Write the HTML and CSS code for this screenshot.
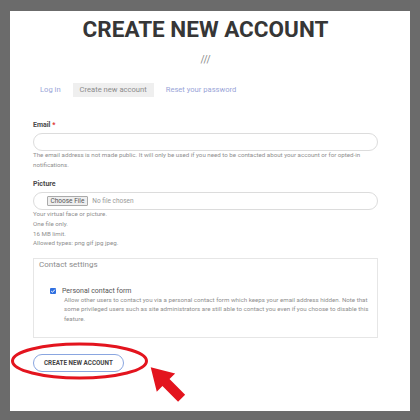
FILE: index.html
```html
<!DOCTYPE html>
<html lang="en">
<head>
    <meta charset="UTF-8">
    <meta name="viewport" content="width=device-width, initial-scale=1.0">
    <title>Create new account</title>
    <link rel="stylesheet" href="styles.css">
</head>
<body>

<div class="page">
    <h1 class="page-title">CREATE NEW ACCOUNT</h1>
    <div class="divider">///</div>

    <!-- Tabs -->
    <ul class="tabs">
        <li><a href="#">Log in</a></li>
        <li class="active">Create new account</li>
        <li><a href="#">Reset your password</a></li>
    </ul>

    <form class="register">
        <div class="field">
            <label for="mail">Email <span class="req">*</span></label>
            <input type="email" id="mail" class="input-box">
            <div class="help">The email address is not made public. It will only be used if you need to be contacted about your account or for opted-in notifications.</div>
        </div>

        <div class="field">
            <label>Picture</label>
            <div class="input-box file-box">
                <span class="file-btn">Choose File</span>
                <span class="file-name">No file chosen</span>
            </div>
            <div class="help">
                Your virtual face or picture.<br>
                One file only.<br>
                16 MB limit.<br>
                Allowed types: png gif jpg jpeg.
            </div>
        </div>

        <!-- Contact settings -->
        <div class="contact">
            <div class="contact-title">Contact settings</div>
            <div class="check-row">
                <span class="check">
                    <svg width="6" height="6" viewBox="0 0 6 6"><path d="M1.2 3.1 L2.5 4.3 L4.9 1.6" fill="none" stroke="#fff" stroke-width="1"/></svg>
                </span>
                <span class="check-label">Personal contact form</span>
            </div>
            <div class="check-desc">Allow other users to contact you via a personal contact form which keeps your email address hidden. Note that some privileged users such as site administrators are still able to contact you even if you choose to disable this feature.</div>
        </div>

        <div class="actions">
            <button type="button" class="submit">CREATE NEW ACCOUNT</button>
            <!-- red annotation -->
            <svg class="mark" width="200" height="70" viewBox="0 0 200 70">
                <ellipse cx="69.5" cy="21" rx="67" ry="17" fill="none" stroke="#e3141e" stroke-width="3"/>
                <polygon transform="translate(140.7 27.3) rotate(45)" points="0,0 21.6,-13 21.6,-5 43.7,-5 43.7,5 21.6,5 21.6,13" fill="#e3141e"/>
            </svg>
        </div>
    </form>
</div>

</body>
</html>
```

FILE: styles.css
```css
body {
    font-family: Roboto, "Liberation Sans", sans-serif;
    margin: 0;
    padding: 0;
    background: #6b6b6b;
}

/* White page */
.page {
    background: #fff;
    width: 400px;
    height: 400px;
    margin: 11px 10px;
    padding: 5px 32px 0 23px;
    box-sizing: border-box;
    overflow: hidden;
}

.page-title {
    margin: 0;
    font-size: 22.5px;
    line-height: 26px;
    font-weight: bold;
    color: #363636;
    text-align: center;
}

.divider {
    margin-top: 12px;
    font-size: 10px;
    line-height: 12px;
    color: #888;
    text-align: center;
}

/* Tabs */
.tabs {
    list-style: none;
    margin: 17px 0 0 0;
    padding: 0;
    display: flex;
    gap: 5px;
}

.tabs li {
    font-size: 7.6px;
    line-height: 14px;
    padding: 0 7px;
    color: #8c8c8c;
}

.tabs li a {
    color: #9aa5d8;
    text-decoration: none;
}

.tabs li.active {
    background: #efefef;
}

/* Form */
.register {
    margin-top: 23px;
}

.field {
    margin-bottom: 9.3px;
}

label {
    display: block;
    font-size: 7px;
    line-height: 10px;
    font-weight: bold;
    color: #4a4a4a;
    margin-bottom: 2.5px;
}

.req {
    color: #d33;
}

.input-box {
    display: block;
    width: 100%;
    height: 18.5px;
    border: 1px solid #dcdcdc;
    border-radius: 10px;
    box-sizing: border-box;
    background: #fff;
    margin: 0;
    padding: 0 8px;
}

.file-box {
    display: flex;
    align-items: center;
    padding-left: 12.5px;
    gap: 4px;
}

.file-btn {
    font-size: 6.5px;
    line-height: 8px;
    color: #555;
    background: #efefef;
    border: 1px solid #aaa;
    border-radius: 1px;
    padding: 0 3px;
}

.file-name {
    font-size: 6.5px;
    color: #999;
}

.help {
    font-size: 6.2px;
    line-height: 9.6px;
    color: #8f8f8f;
}

/* Contact settings box */
.contact {
    border: 1px solid #e6e6e6;
    height: 80px;
    box-sizing: border-box;
    padding: 1px 4px 0 4px;
}

.contact-title {
    font-size: 8px;
    line-height: 10px;
    color: #8c8c8c;
    padding-left: 1px;
}

.check-row {
    display: flex;
    align-items: center;
    margin-top: 16px;
    padding-left: 12px;
    gap: 6px;
    height: 10px;
}

.check {
    width: 6px;
    height: 6px;
    background: #2f6fe0;
    border-radius: 1px;
    display: flex;
}

.check-label {
    font-size: 7px;
    color: #555;
}

.check-desc {
    margin-left: 26px;
    font-size: 6.2px;
    line-height: 9.3px;
    color: #8f8f8f;
}

/* Submit */
.actions {
    margin-top: 12px;
    position: relative;
}

.submit {
    height: 18px;
    padding: 0 10px;
    border: 1px solid #8aa6e0;
    border-radius: 9px;
    background: #fff;
    font-family: Roboto, "Liberation Sans", sans-serif;
    font-size: 6.3px;
    font-weight: bold;
    color: #444;
    cursor: pointer;
}

.mark {
    position: absolute;
    left: -23px;
    top: -10px;
}
```
